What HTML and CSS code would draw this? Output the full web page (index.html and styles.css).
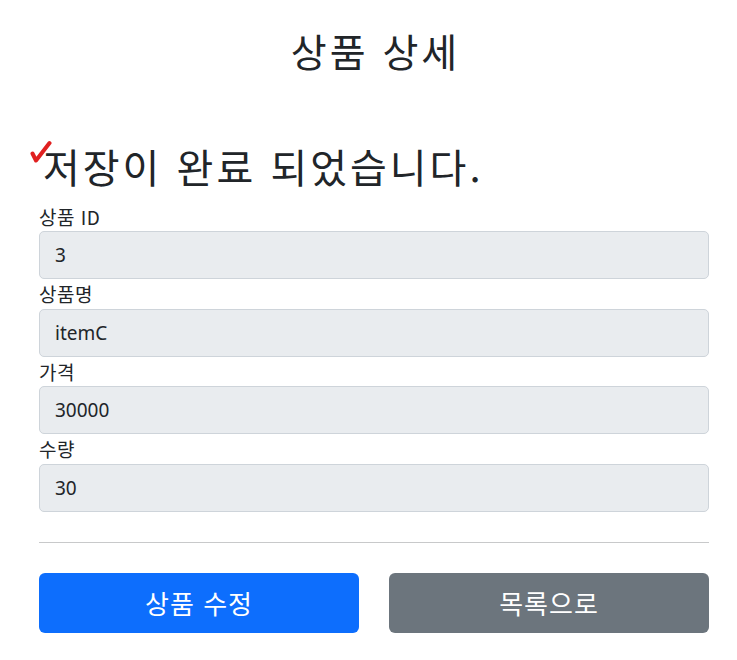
FILE: index.html
```html
<!DOCTYPE html>
<html lang="ko">
<head>
<meta charset="utf-8">
<title>상품 상세</title>
<link rel="stylesheet" href="styles.css">
</head>
<body>
<div class="container">
  <div class="page-header">
    <h2 class="title">상품 상세</h2>
  </div>
  <h2 class="status"><span class="check"><svg width="22" height="24" viewBox="0 0 22 24"><path d="M2.5 13.5 L6 20.5 L19.5 3" fill="none" stroke="#e02020" stroke-width="4" stroke-linecap="round" stroke-linejoin="round"/></svg></span>저장이 완료 되었습니다.</h2>
  <div class="field">
    <label class="label">상품 ID</label>
    <div class="control">3</div>
  </div>
  <div class="field">
    <label class="label">상품명</label>
    <div class="control">itemC</div>
  </div>
  <div class="field">
    <label class="label">가격</label>
    <div class="control">30000</div>
  </div>
  <div class="field">
    <label class="label">수량</label>
    <div class="control">30</div>
  </div>
  <hr class="divider">
  <div class="actions">
    <button class="btn btn-primary">상품 수정</button>
    <button class="btn btn-secondary">목록으로</button>
  </div>
</div>
</body>
</html>
```

FILE: styles.css
```css
html, body {
  margin: 0;
  padding: 0;
  background: #fff;
}
body {
  font-family: "Noto Sans", "Noto Sans CJK KR", sans-serif;
  color: #212529;
}
.container {
  padding: 0 28px 0 39px;
}
.page-header {
  padding-top: 20px;
  text-align: center;
}
.title {
  margin: 0;
  font-family: "Noto Sans CJK KR", sans-serif;
  font-weight: 400;
  font-size: 39px;
  letter-spacing: 3px;
  line-height: 60px;
  padding-left: 3px;
}
.status {
  margin: 62px 0 0 0;
  padding-bottom: 11.5px;
  font-family: "Noto Sans CJK KR", sans-serif;
  font-weight: 400;
  font-size: 40px;
  letter-spacing: 3px;
  line-height: 48px;
  display: flex;
  align-items: flex-start;
}
.check {
  display: inline-block;
  width: 4px;
  margin-left: -9px;
  margin-right: 9px;
  margin-top: -2px;
  height: 24px;
  overflow: visible;
}
.check svg {
  display: block;
}
.field {
  display: flex;
  flex-direction: column;
}
.label {
  font-family: "Noto Sans CJK KR", sans-serif;
  font-size: 19px;
  letter-spacing: 0.5px;
  line-height: 29.5px;
}
.control {
  box-sizing: border-box;
  height: 48px;
  padding: 0 15px;
  display: flex;
  align-items: center;
  background: #e9ecef;
  border: 1px solid #ced4da;
  border-radius: 5px;
  font-size: 19px;
}
.divider {
  margin: 30px 0;
  border: 0;
  border-top: 1px solid #c8c9ca;
}
.actions {
  display: flex;
  gap: 30px;
}
.btn {
  flex: 1;
  height: 60px;
  border: 0;
  border-radius: 6px;
  color: #fff;
  font-family: "Noto Sans CJK KR", sans-serif;
  font-size: 26px;
  letter-spacing: 1px;
  cursor: pointer;
}
.btn-primary {
  background: #0d6efd;
}
.btn-secondary {
  background: #6c757d;
}
```
